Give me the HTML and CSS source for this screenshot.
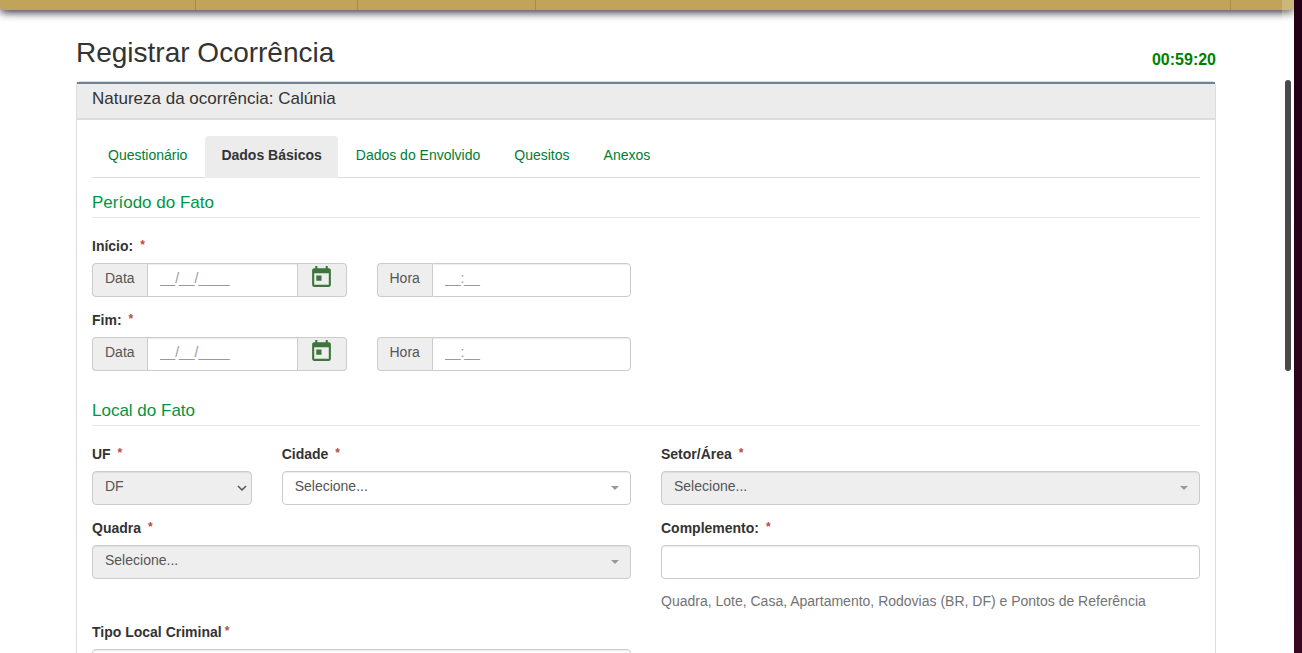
FILE: index.html
```html
<!DOCTYPE html>
<html lang="pt-BR">
<head>
<meta charset="utf-8">
<title>Registrar Ocorrência</title>
<link rel="stylesheet" href="styles.css">
</head>
<body>
<div class="window">
  <nav class="topbar">
    <span class="slot slot-a"></span><span class="slot slot-b"></span><span class="slot slot-c"></span><span class="slot slot-d"></span>
  </nav>
  <main class="container">
    <header class="page-head">
      <h1>Registrar Ocorrência</h1>
      <span class="timer">00:59:20</span>
    </header>
    <section class="panel">
      <h2 class="panel-heading">Natureza da ocorrência: Calúnia</h2>
      <div class="panel-body">
        <ul class="tabs">
          <li><a href="#questionario">Questionário</a></li>
          <li><a class="active" href="#dados">Dados Básicos</a></li>
          <li><a href="#envolvido">Dados do Envolvido</a></li>
          <li><a href="#quesitos">Quesitos</a></li>
          <li><a href="#anexos">Anexos</a></li>
        </ul>
        <form>
          <h3 class="legend">Período do Fato</h3>
          <div class="row">
            <div class="field span-3">
              <label for="inicio-data">Início: <span class="req">*</span></label>
              <div class="group">
                <span class="addon">Data</span>
                <input id="inicio-data" type="text" placeholder="__/__/____">
                <button type="button" class="calendar" aria-label="Calendário"><svg viewBox="0 0 24 24"><path d="M19 3h-1V1h-2v2H8V1H6v2H5c-1.100 0-2 .9-2 2v14c0 1.100.9 2 2 2h14c1.100 0 2-.9 2-2V5c0-1.100-.9-2-2-2zm0 16H5V8h14v11zM7 10h5v5H7z"/></svg></button>
              </div>
            </div>
            <div class="field span-3 end">
              <div class="group">
                <label class="addon" for="inicio-hora">Hora</label>
                <input id="inicio-hora" type="text" placeholder="__:__">
              </div>
            </div>
          </div>
          <div class="row">
            <div class="field span-3">
              <label for="fim-data">Fim: <span class="req">*</span></label>
              <div class="group">
                <span class="addon">Data</span>
                <input id="fim-data" type="text" placeholder="__/__/____">
                <button type="button" class="calendar" aria-label="Calendário"><svg viewBox="0 0 24 24"><path d="M19 3h-1V1h-2v2H8V1H6v2H5c-1.100 0-2 .9-2 2v14c0 1.100.9 2 2 2h14c1.100 0 2-.9 2-2V5c0-1.100-.9-2-2-2zm0 16H5V8h14v11zM7 10h5v5H7z"/></svg></button>
              </div>
            </div>
            <div class="field span-3 end">
              <div class="group">
                <label class="addon" for="fim-hora">Hora</label>
                <input id="fim-hora" type="text" placeholder="__:__">
              </div>
            </div>
          </div>
          <h3 class="legend">Local do Fato</h3>
          <div class="row">
            <div class="field span-2">
              <label for="uf">UF <span class="req">*</span></label>
              <div class="pick">
                <select id="uf" disabled><option>DF</option></select>
                <svg class="chevron" viewBox="0 0 10 6"><path d="M1 1l4 4 4-4"/></svg>
              </div>
            </div>
            <div class="field span-4">
              <label for="cidade">Cidade <span class="req">*</span></label>
              <div class="pick">
                <select id="cidade"><option>Selecione...</option></select>
                <svg class="caret" viewBox="0 0 8 4"><path d="M0 0h8L4 4z"/></svg>
              </div>
            </div>
            <div class="field span-6">
              <label for="setor">Setor/Área <span class="req">*</span></label>
              <div class="pick">
                <select id="setor" disabled><option>Selecione...</option></select>
                <svg class="caret" viewBox="0 0 8 4"><path d="M0 0h8L4 4z"/></svg>
              </div>
            </div>
          </div>
          <div class="row">
            <div class="field span-6">
              <label for="quadra">Quadra <span class="req">*</span></label>
              <div class="pick">
                <select id="quadra" disabled><option>Selecione...</option></select>
                <svg class="caret" viewBox="0 0 8 4"><path d="M0 0h8L4 4z"/></svg>
              </div>
            </div>
            <div class="field span-6">
              <label for="complemento">Complemento: <span class="req">*</span></label>
              <input id="complemento" type="text">
              <p class="help">Quadra, Lote, Casa, Apartamento, Rodovias (BR, DF) e Pontos de Referência</p>
            </div>
          </div>
          <div class="row">
            <div class="field span-6">
              <label for="tipo">Tipo Local Criminal<span class="req">*</span></label>
              <div class="pick">
                <select id="tipo"><option>Selecione...</option></select>
                <svg class="caret" viewBox="0 0 8 4"><path d="M0 0h8L4 4z"/></svg>
              </div>
            </div>
          </div>
        </form>
      </div>
    </section>
  </main>
  <div class="scroll"><div class="thumb"></div></div>
</div>
</body>
</html>
```
FILE: styles.css
```css
* { box-sizing: border-box; }
html { height: 100%; background: #29001c; }
body {
  margin: 0;
  height: 100vh;
  padding-right: 8px;
  overflow: hidden;
  background: linear-gradient(#240018 15%, #380822);
  color: #333;
  font: 14px/20px "Liberation Sans", Arial, sans-serif;
}
.window { position: relative; height: 100%; overflow: hidden; background: #fff; }
.topbar {
  display: flex;
  height: 10px;
  background: #bfa45a;
  border-radius: 0 0 4px 4px;
  box-shadow: 0 2px 10px rgba(0, 0, 0, .9);
}
.slot { border-right: 1px solid #a88d48; }
.slot-a { width: 196px; }
.slot-b { width: 162px; }
.slot-c { width: 178px; }
.slot-d { flex: 1; margin-right: 63px; }
.container { max-width: 1142px; margin: 0 auto; padding-right: 2px; }
.page-head {
  display: flex;
  justify-content: space-between;
  align-items: flex-end;
  padding: 25px 0 11px;
}
h1 { margin: 0; font-size: 28px; line-height: 35px; font-weight: 400; }
.timer { color: green; font-size: 16px; font-weight: 700; line-height: 20px; }
.panel { border: 1px solid #ddd; border-radius: 4px 4px 0 0; }
.panel-heading {
  margin: 0;
  padding: 5px 15px 9px;
  border-top: 2px solid #6c8494;
  border-bottom: 2px solid #ddd;
  background: #ececec;
  font-size: 17px;
  line-height: 20px;
  font-weight: 400;
}
.panel-body { padding: 16px 15px; }
.tabs { display: flex; gap: 2px; margin: 0 0 -2px; padding: 0; border-bottom: 1px solid #ddd; list-style: none; }
.tabs a {
  display: block;
  margin-bottom: -1px;
  padding: 9px 16px 13px;
  border-radius: 4px 4px 0 0;
  color: #007d32;
  text-decoration: none;
}
.tabs .active { background: #ececec; color: #333; font-weight: 700; }
.legend {
  margin: 0 0 18px;
  padding: 16px 0 4px;
  border-bottom: 1px solid #e5e5e5;
  color: #009640;
  font-size: 17px;
  line-height: 21px;
  font-weight: 400;
}
.row { display: grid; grid-template-columns: repeat(12, minmax(0, 1fr)); column-gap: 30px; margin-bottom: 13px; }
.span-2 { grid-column: span 2; }
.span-3 { grid-column: span 3; }
.span-4 { grid-column: span 4; }
.span-6 { grid-column: span 6; }
.end { align-self: end; }
.field > label { display: block; margin-bottom: 7px; font-weight: 700; }
.req { margin-left: 3px; color: #b94a48; font-size: 12px; line-height: 12px; vertical-align: 2px; }
input, select {
  display: block;
  width: 100%;
  height: 34px;
  margin: 0;
  padding: 3px 12px 7px;
  border: 1px solid #ccc;
  border-radius: 4px;
  background: #fff;
  box-shadow: inset 0 1px 1px rgba(0, 0, 0, .075);
  color: #555;
  font: inherit;
  appearance: none;
}
input::placeholder { color: #999; opacity: 1; }
select:disabled { background: #eee; opacity: 1; color: #555; }
.group { display: flex; }
.group input { flex: 1; min-width: 0; border-radius: 0; }
.group input:last-child { border-radius: 0 4px 4px 0; }
.addon {
  padding: 4px 12px 8px;
  border: 1px solid #ccc;
  border-right: 0;
  border-radius: 4px 0 0 4px;
  background: #eee;
  color: #555;
}
.calendar {
  width: 49px;
  padding: 1px 11px 6px;
  border: 1px solid #ccc;
  border-left: 0;
  border-radius: 0 4px 4px 0;
  background: #eee;
}
.calendar svg { display: block; width: 25px; height: 25px; fill: #3c763d; }
.pick { position: relative; }
.caret { position: absolute; right: 12px; top: 15px; width: 8px; height: 4px; fill: #999; }
.chevron { position: absolute; right: 5px; top: 14px; width: 10px; height: 6px; fill: none; stroke: #555; stroke-width: 1.5; }
.help { margin: 14px 0 0; line-height: 16px; color: #737373; }
.scroll {
  position: absolute;
  top: 0;
  right: 0;
  bottom: 0;
  width: 12px;
  padding: 80px 3px 0;
  background: rgba(255, 255, 255, .2);
}
.thumb { height: 291px; border-radius: 3px; background: #494949; }
```
